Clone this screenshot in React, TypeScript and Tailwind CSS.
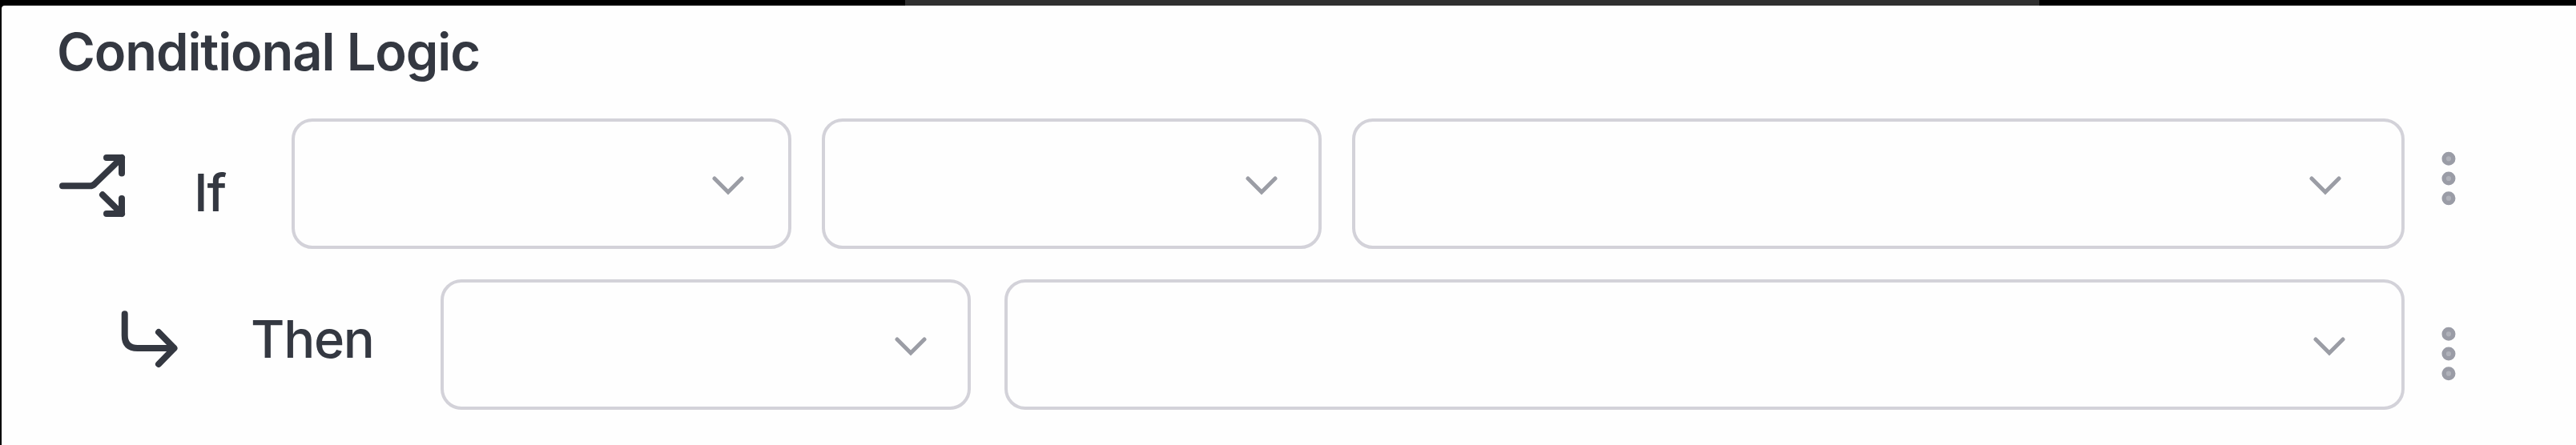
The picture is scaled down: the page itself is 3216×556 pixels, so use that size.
import type { ReactNode } from "react";

function Chevron() {
  return (
    <svg width="40" height="24" viewBox="0 0 40 24" fill="none" className="shrink-0">
      <path
        d="M3 3L20 20L37 3"
        stroke="#9b9da5"
        strokeWidth="5"
        strokeLinecap="round"
      />
    </svg>
  );
}

function Select({ className, label }: { className: string; label: string }) {
  return (
    <button
      type="button"
      aria-label={label}
      className={`flex h-[163px] shrink-0 items-center justify-end rounded-[26px] border-4 border-[#d3d2d9] bg-[#fefefe] pt-[4px] ${className}`}
    >
      <Chevron />
    </button>
  );
}

function MoreButton({ className }: { className: string }) {
  return (
    <button type="button" aria-label="More" className={`shrink-0 ${className}`}>
      <svg width="18" height="68" viewBox="0 0 18 68" fill="#b0b2ba" stroke="#9a9ca6" strokeWidth="5.4">
        <circle cx="9" cy="9.3" r="5.8" />
        <circle cx="9" cy="34" r="5.8" />
        <circle cx="9" cy="58.7" r="5.8" />
      </svg>
    </button>
  );
}

function BranchIcon() {
  return (
    <svg
      width="84"
      height="80"
      viewBox="0 0 84 80"
      fill="none"
      stroke="#343841"
      strokeWidth="8"
      strokeLinecap="round"
      strokeLinejoin="round"
      className="mt-[44px] shrink-0"
    >
      <path d="M5 40.3H39.5Q42.5 40.3 45 38L79 5" />
      <path d="M60 5H79V24.5" />
      <path d="M55 51.3L79 75" />
      <path d="M60 75H79V56" />
    </svg>
  );
}

function ThenIcon() {
  return (
    <svg
      width="74"
      height="74"
      viewBox="0 0 74 74"
      fill="none"
      stroke="#343841"
      strokeWidth="8"
      strokeLinecap="round"
      strokeLinejoin="round"
      className="mt-[37px] shrink-0"
    >
      <path d="M5.7 6.3V33Q5.7 49 21.7 49H67" />
      <path d="M48 29L67.5 49L48 69" />
    </svg>
  );
}

function Label({ className, children }: { className: string; children: ReactNode }) {
  return (
    <span
      className={`shrink-0 text-[65px] leading-[80px] font-medium tracking-[-1.3px] whitespace-nowrap ${className}`}
    >
      {children}
    </span>
  );
}

export default function App() {
  return (
    <div className="flex h-[556px] w-[3216px] flex-col overflow-hidden bg-black font-['Inter','Liberation_Sans',sans-serif] text-[#343841]">
      <div className="h-[7px] shrink-0 pl-[1130px]">
        <div className="h-full w-[1416px] bg-[#2f2f2f]" />
      </div>
      <main className="ml-[2px] flex flex-1 flex-col rounded-tl-[4px] bg-[#fefefe]">
        <h1 className="mt-[18px] ml-[69px] h-[80px] text-[65px] leading-[80px] font-semibold tracking-[-1.1px] whitespace-nowrap">
          Conditional Logic
        </h1>
        <div className="mt-[43px] ml-[71px] flex h-[163px] items-start">
          <BranchIcon />
          <Label className="mt-[53px] ml-[85px] w-[122px]">If</Label>
          <Select className="w-[624px] pr-[55px]" label="Field" />
          <Select className="ml-[38px] w-[624px] pr-[51px]" label="Operator" />
          <Select className="ml-[38px] w-[1314px] pr-[75px]" label="Value" />
          <MoreButton className="mt-[41px] ml-[46px]" />
        </div>
        <div className="mt-[38px] ml-[148px] flex h-[163px] items-start">
          <ThenIcon />
          <Label className="mt-[35px] ml-[89px] w-[237px]">Then</Label>
          <Select className="w-[662px] pr-[51px]" label="Action" />
          <Select className="ml-[42px] w-[1748px] pr-[70px]" label="Target" />
          <MoreButton className="mt-[59px] ml-[46px]" />
        </div>
      </main>
    </div>
  );
}
